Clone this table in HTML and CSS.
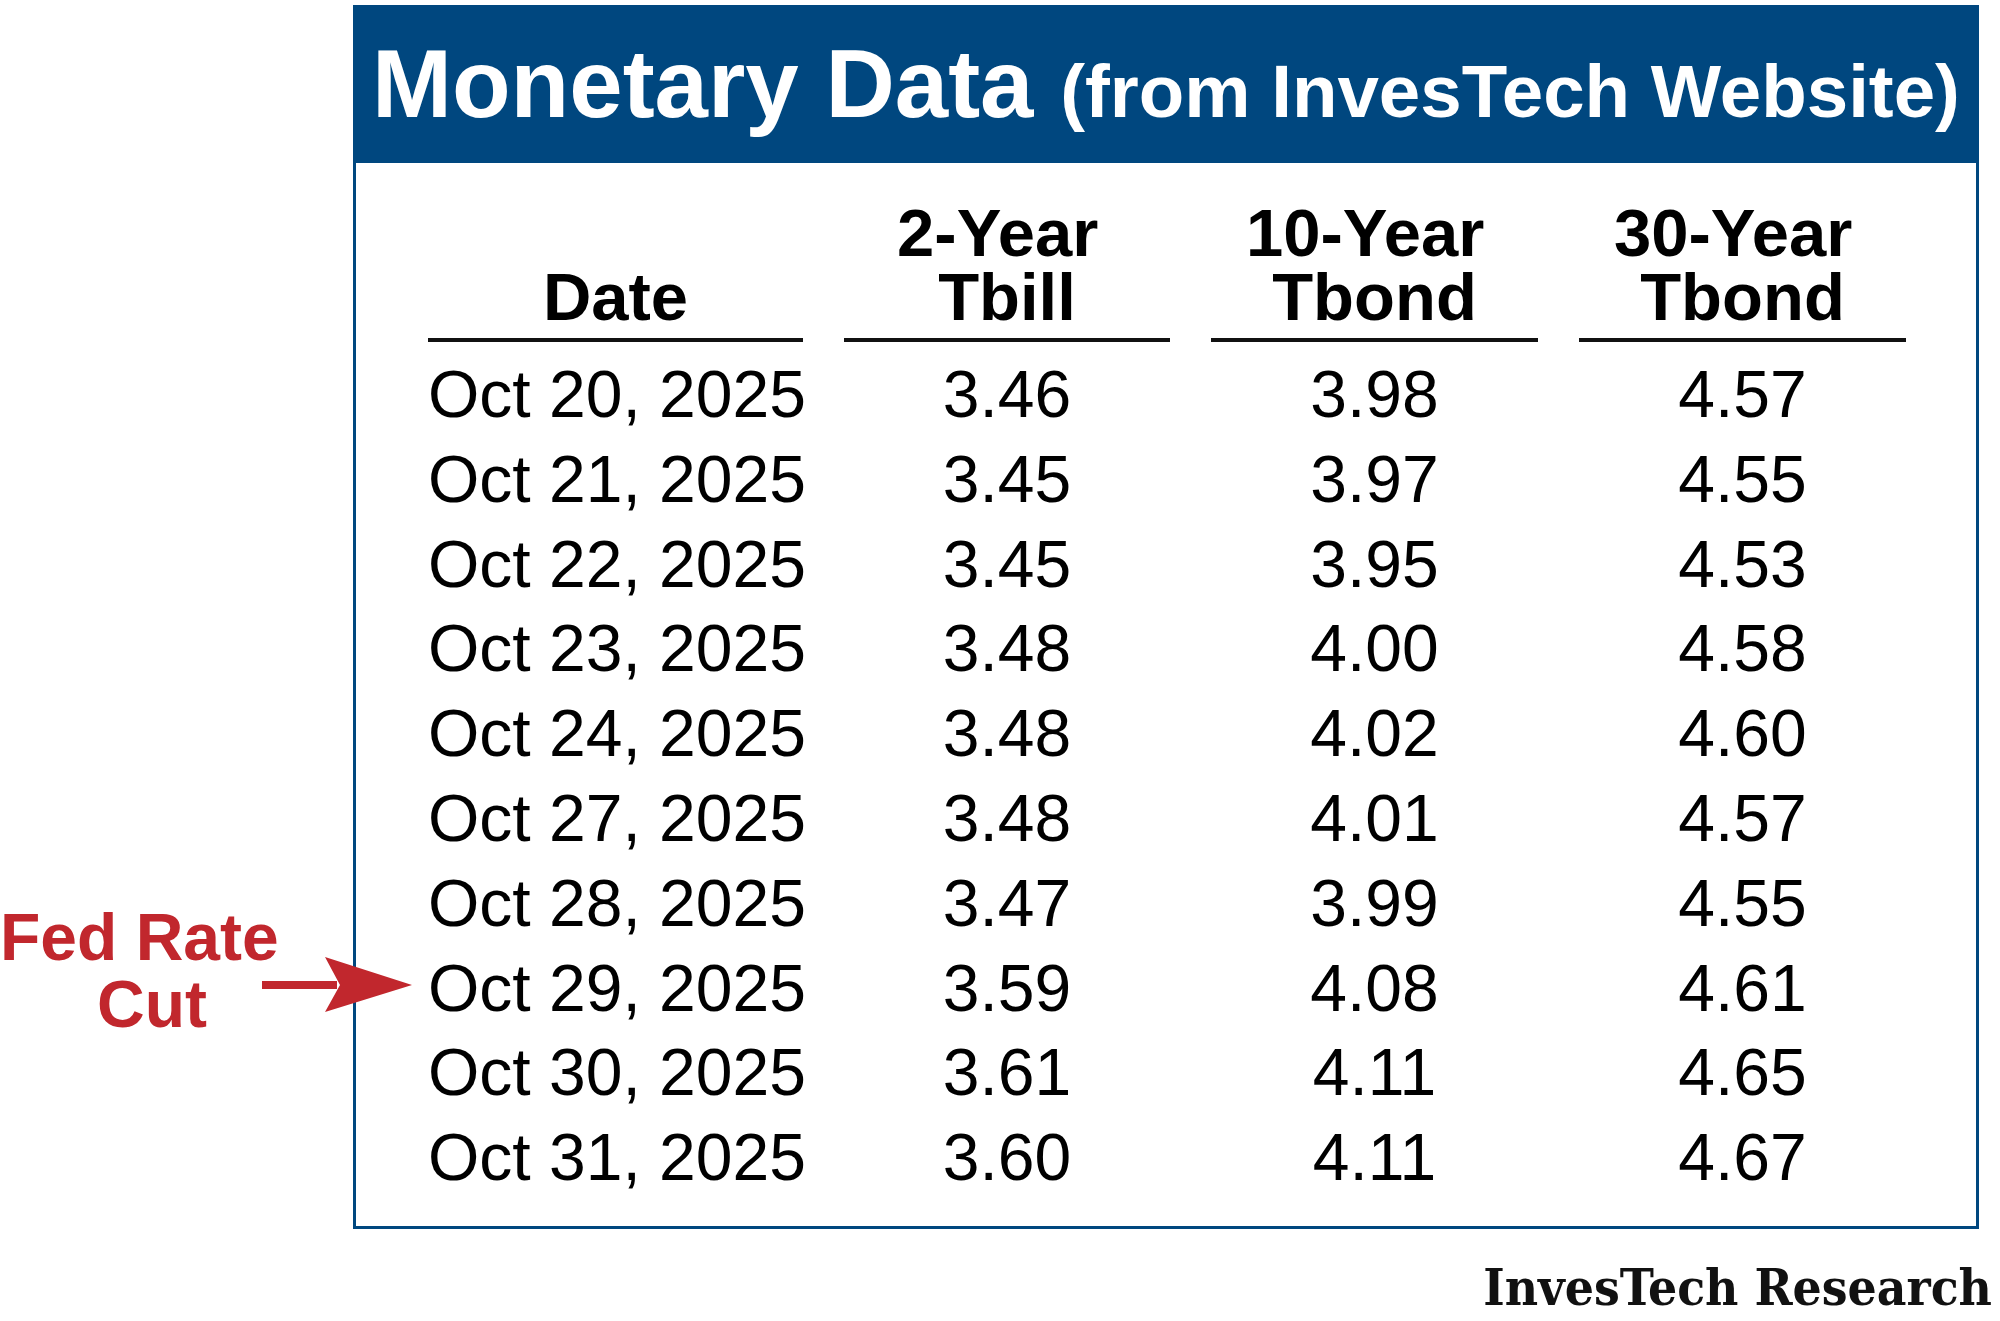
FILE: index.html
```html
<!DOCTYPE html>
<html>
<head>
<meta charset="utf-8">
<link rel="stylesheet" href="styles.css">
</head>
<body>
<div class="page">
  <div class="box">
    <div class="band"><span class="title">Monetary Data</span> <span class="sub">(from InvesTech Website)</span></div>
    <div class="tbl">
      <div class="th"><span class="th-line">Date</span></div>
      <div class="th"><span class="th-line">2-Year&nbsp;</span><span class="th-line">Tbill</span></div>
      <div class="th"><span class="th-line">10-Year&nbsp;</span><span class="th-line">Tbond</span></div>
      <div class="th"><span class="th-line">30-Year&nbsp;</span><span class="th-line">Tbond</span></div>

      <div class="td">Oct 20, 2025</div><div class="td">3.46</div><div class="td">3.98</div><div class="td">4.57</div>
      <div class="td">Oct 21, 2025</div><div class="td">3.45</div><div class="td">3.97</div><div class="td">4.55</div>
      <div class="td">Oct 22, 2025</div><div class="td">3.45</div><div class="td">3.95</div><div class="td">4.53</div>
      <div class="td">Oct 23, 2025</div><div class="td">3.48</div><div class="td">4.00</div><div class="td">4.58</div>
      <div class="td">Oct 24, 2025</div><div class="td">3.48</div><div class="td">4.02</div><div class="td">4.60</div>
      <div class="td">Oct 27, 2025</div><div class="td">3.48</div><div class="td">4.01</div><div class="td">4.57</div>
      <div class="td">Oct 28, 2025</div><div class="td">3.47</div><div class="td">3.99</div><div class="td">4.55</div>
      <div class="td">Oct 29, 2025</div><div class="td">3.59</div><div class="td">4.08</div><div class="td">4.61</div>
      <div class="td">Oct 30, 2025</div><div class="td">3.61</div><div class="td">4.11</div><div class="td">4.65</div>
      <div class="td">Oct 31, 2025</div><div class="td">3.60</div><div class="td">4.11</div><div class="td">4.67</div>
    </div>
  </div>

  <div class="credit">InvesTech Research</div>

  <div class="callout">
    <div class="callout-line">Fed Rate</div>
    <div class="callout-line cut">Cut</div>
  </div>
  <svg class="arrow" width="160" height="70" viewBox="0 0 160 70">
    <rect x="2" y="31" width="75" height="8" fill="#c1272d"/>
    <path d="M65 7 L152 35 L65 62 L80 35 Z" fill="#c1272d"/>
  </svg>
</div>
</body>
</html>
```

FILE: styles.css
```css
html, body {
  margin: 0;
  padding: 0;
  background: #ffffff;
}

.page {
  position: relative;
  width: 2000px;
  height: 1321px;
  padding-top: 5px;
  box-sizing: border-box;
  overflow: hidden;
  font-family: "Liberation Sans", Arial, sans-serif;
  color: #000;
}

.box {
  margin-left: 353px;
  width: 1626px;
  border: 3px solid #00477f;
  box-sizing: border-box;
}

.band {
  background: #00477f;
  height: 155px;
  padding: 28px 0 0 16px;
  box-sizing: border-box;
  color: #ffffff;
  font-weight: bold;
  font-size: 96px;
  line-height: 1;
  white-space: nowrap;
}

.title {
  font-size: 96px;
}

.sub {
  font-size: 74.5px;
}

.tbl {
  display: grid;
  grid-template-columns: 375px 326px 327px 327px;
  column-gap: 41px;
  padding: 38px 0 26px 72px;
}

.th {
  display: flex;
  flex-direction: column;
  justify-content: flex-end;
  align-items: center;
  font-weight: bold;
  font-size: 67px;
  padding-bottom: 9px;
  border-bottom: 4px solid #111;
  margin-bottom: 10px;
}

.th-line {
  display: block;
  height: 64px;
  line-height: 64px;
  white-space: nowrap;
}

.td {
  text-align: center;
  font-size: 66px;
  line-height: 84.8px;
  white-space: nowrap;
}

.credit {
  margin-top: 33px;
  padding-right: 8px;
  text-align: right;
  font-family: "DejaVu Serif Condensed", "DejaVu Serif", "Liberation Serif", serif;
  font-stretch: condensed;
  font-weight: bold;
  font-size: 51px;
  line-height: 1;
  color: #111;
}

.callout {
  position: absolute;
  left: 0;
  top: 904px;
  color: #c1272d;
  font-weight: bold;
  font-size: 66px;
  line-height: 67px;
  white-space: nowrap;
}

.cut {
  padding-left: 97px;
}

.arrow {
  position: absolute;
  left: 260px;
  top: 950px;
}
```
